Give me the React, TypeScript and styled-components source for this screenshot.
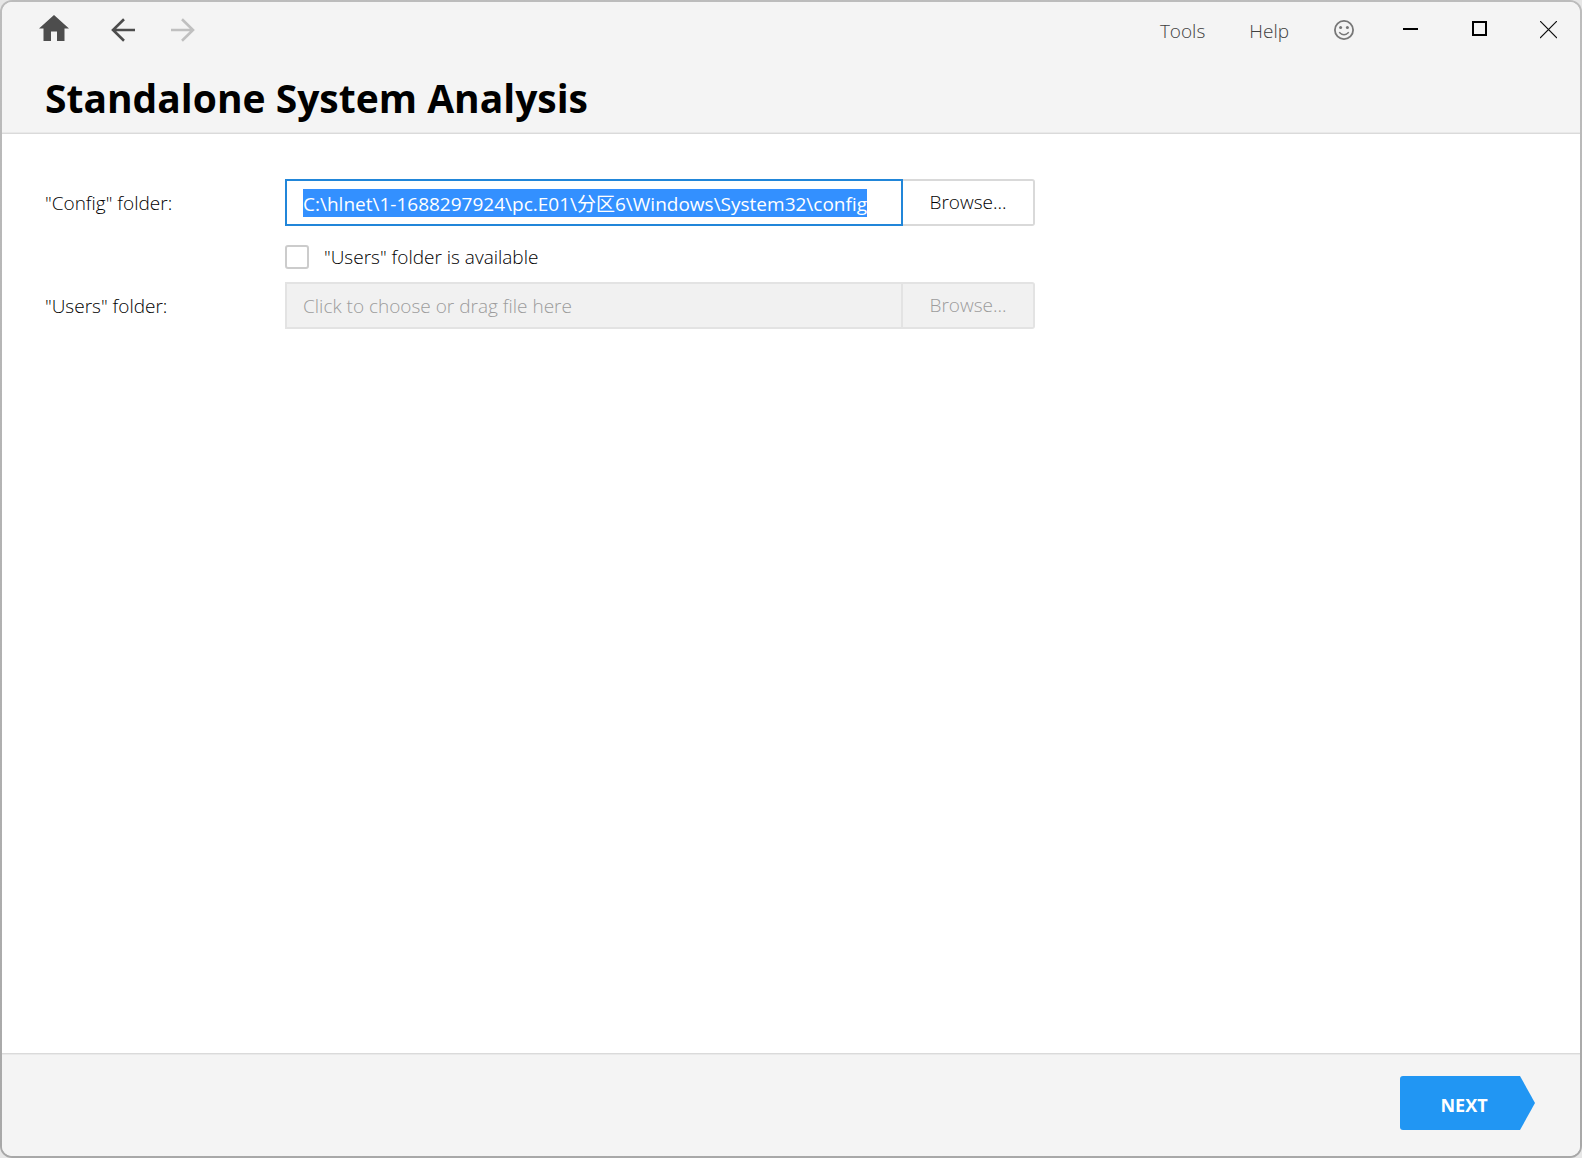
import { useEffect, useRef, useState } from "react";
import styled, { createGlobalStyle } from "styled-components";

const GlobalStyle = createGlobalStyle`
  *, *::before, *::after { box-sizing: border-box; }
  body {
    margin: 0;
    background: #e6e6e6;
    font-family: "Open Sans", "Noto Sans", "Noto Sans CJK SC", sans-serif;
    font-size: 19px;
    font-weight: 300;
    line-height: 26px;
    color: #000;
  }
  button, input { font: inherit; color: inherit; }
`;

const WindowFrame = styled.div`
  display: flex;
  min-height: 100vh;
  padding: 2px;
  border-radius: 12px;
  background: linear-gradient(#bcbcbc, #a8a8a8);
`;

const Window = styled.div`
  flex: 1;
  display: flex;
  flex-direction: column;
  border-radius: 10px;
  overflow: hidden;
  background: #fff;
`;

const Header = styled.header`
  background: #f4f4f4;
  border-bottom: 1px solid #dadada;
  box-shadow: inset 0 -1px #e9e9e9;
`;

const TitleBar = styled.div`
  display: flex;
  justify-content: space-between;
  align-items: center;
  height: 56px;
  padding-left: 26px;
`;

const Group = styled.div<{ $gap: number }>`
  display: flex;
  align-items: center;
  gap: ${(p) => p.$gap}px;
`;

const BarButton = styled.button<{ $width?: number }>`
  display: flex;
  align-items: center;
  justify-content: center;
  width: ${(p) => (p.$width ? `${p.$width}px` : "auto")};
  height: 44px;
  padding: 0;
  border: 0;
  background: none;
  color: #4d4d4d;
  &:disabled { color: #c0c0c0; }
`;

const MenuButton = styled(BarButton)`
  padding: 2px 22px 0;
  color: #404040;
`;

const Title = styled.h1`
  margin: 0;
  padding: 13px 43px 8px;
  font-size: 39px;
  line-height: 54px;
  font-weight: 700;
  color: #000;
`;

const Main = styled.main`
  flex: 1;
  padding: 45px 43px;
`;

const Form = styled.form`
  display: grid;
  grid-template-columns: 240px minmax(0, 750px);
  align-items: center;
`;

const Label = styled.label``;

const PickerRow = styled.div`
  display: flex;
`;

const PathInput = styled.input`
  flex: 1;
  min-width: 0;
  height: 47px;
  padding: 0 16px;
  border: 2px solid #d9d9d9;
  outline: none;
  background: #fff;
  font-weight: 400;
  &:focus { border-color: #2186d9; }
  &::selection { background: #3390ff; color: #fff; }
  &::placeholder { color: #9c9c9c; font-weight: 300; opacity: 1; }
  &:disabled { background: #f1f1f1; border-color: #e3e3e3; }
`;

const BrowseButton = styled.button`
  width: 132px;
  height: 47px;
  padding: 0 0 2px;
  border: 2px solid #d9d9d9;
  border-left-width: 0;
  border-radius: 0 3px 3px 0;
  background: #fff;
  &:disabled {
    background: #f1f1f1;
    border-color: #e3e3e3;
    color: #9c9c9c;
  }
`;

const CheckRow = styled.div`
  grid-column: 2;
  display: flex;
  align-items: center;
  gap: 15px;
  height: 56px;
  padding-top: 6px;
`;

const Checkbox = styled.input`
  appearance: none;
  width: 24px;
  height: 24px;
  margin: 0;
  border: 2px solid #ccc;
  border-radius: 3px;
  background: #fff;
  &:checked { background: #2196f3; border-color: #2196f3; }
`;

const Footer = styled.footer`
  display: flex;
  justify-content: flex-end;
  padding: 22px 45px 26px;
  border-top: 1px solid #dadada;
  box-shadow: inset 0 1px #e9e9e9;
  background: #f4f4f4;
`;

const NextButton = styled.button`
  width: 135px;
  height: 54px;
  padding: 3px 7px 0 0;
  border: 0;
  border-radius: 3px 0 0 3px;
  background: #2196f3;
  clip-path: polygon(0 0, 120px 0, 100% 50%, 120px 100%, 0 100%);
  color: #fff;
  font-size: 18px;
  font-weight: 700;
`;

const HomeIcon = () => (
  <svg width="30" height="30" viewBox="0 0 30 30" fill="currentColor">
    <path d="M15 0 30 13.500H25.500V26H18V16.500H12V26H4.500V13.500H0Z" />
  </svg>
);

const BackIcon = () => (
  <svg width="24" height="24" viewBox="0 0 24 24" fill="none" stroke="currentColor" strokeWidth="2.600">
    <path d="M13 1.200 2 12 13 22.800M2 12H24" />
  </svg>
);

const ForwardIcon = () => (
  <svg width="24" height="24" viewBox="0 0 24 24" fill="none" stroke="currentColor" strokeWidth="2.600">
    <path d="M11 1.200 22 12 11 22.800M22 12H0" />
  </svg>
);

const SmileIcon = () => (
  <svg width="20" height="20" viewBox="0 0 20 20" fill="none" stroke="#777" strokeWidth="1.800">
    <circle cx="10" cy="10" r="9.100" />
    <circle cx="6.600" cy="7.600" r="1.500" fill="#777" stroke="none" />
    <circle cx="13.400" cy="7.600" r="1.500" fill="#777" stroke="none" />
    <path d="M5.200 12.300Q10 17.300 14.800 12.300" strokeWidth="1.500" />
  </svg>
);

const MinimizeIcon = () => (
  <svg width="15" height="16" viewBox="0 0 15 16">
    <path d="M0 6H15V8H0Z" fill="#000" />
  </svg>
);

const MaximizeIcon = () => (
  <svg width="15" height="18" viewBox="0 0 15 18" fill="none" stroke="#000" strokeWidth="2">
    <path d="M1 1H14V14H1Z" />
  </svg>
);

const CloseIcon = () => (
  <svg width="17" height="18" viewBox="0 0 17 18" fill="none" stroke="#111" strokeWidth="1.200">
    <path d="M0 0 17 17M17 0 0 17" />
  </svg>
);

export default function App() {
  const configRef = useRef<HTMLInputElement>(null);
  const [config, setConfig] = useState("C:\\hlnet\\1-1688297924\\pc.E01\\分区6\\Windows\\System32\\config");
  const [users, setUsers] = useState("");
  const [hasUsers, setHasUsers] = useState(false);

  useEffect(() => {
    configRef.current?.focus();
    configRef.current?.select();
  }, []);

  return (
    <>
      <GlobalStyle />
      <WindowFrame>
        <Window>
          <Header>
            <TitleBar>
              <Group $gap={8}>
                <BarButton $width={52} aria-label="Home"><HomeIcon /></BarButton>
                <BarButton $width={70} aria-label="Back"><BackIcon /></BarButton>
                <BarButton $width={34} aria-label="Forward" disabled><ForwardIcon /></BarButton>
              </Group>
              <Group $gap={2}>
                <Group $gap={0}>
                  <MenuButton>Tools</MenuButton>
                  <MenuButton>Help</MenuButton>
                  <BarButton $width={66} aria-label="Feedback"><SmileIcon /></BarButton>
                </Group>
                <Group $gap={6}>
                  <BarButton $width={63} aria-label="Minimize"><MinimizeIcon /></BarButton>
                  <BarButton $width={63} aria-label="Maximize"><MaximizeIcon /></BarButton>
                  <BarButton $width={63} aria-label="Close"><CloseIcon /></BarButton>
                </Group>
              </Group>
            </TitleBar>
            <Title>Standalone System Analysis</Title>
          </Header>
          <Main>
            <Form id="analysis" onSubmit={(e) => e.preventDefault()}>
              <Label htmlFor="config-folder">"Config" folder:</Label>
              <PickerRow>
                <PathInput
                  id="config-folder"
                  ref={configRef}
                  value={config}
                  spellCheck={false}
                  onChange={(e) => setConfig(e.target.value)}
                />
                <BrowseButton type="button">Browse...</BrowseButton>
              </PickerRow>
              <CheckRow>
                <Checkbox
                  id="users-available"
                  type="checkbox"
                  checked={hasUsers}
                  onChange={(e) => setHasUsers(e.target.checked)}
                />
                <Label htmlFor="users-available">"Users" folder is available</Label>
              </CheckRow>
              <Label htmlFor="users-folder">"Users" folder:</Label>
              <PickerRow>
                <PathInput
                  id="users-folder"
                  value={users}
                  placeholder="Click to choose or drag file here"
                  disabled={!hasUsers}
                  onChange={(e) => setUsers(e.target.value)}
                />
                <BrowseButton type="button" disabled={!hasUsers}>Browse...</BrowseButton>
              </PickerRow>
            </Form>
          </Main>
          <Footer>
            <NextButton type="submit" form="analysis">NEXT</NextButton>
          </Footer>
        </Window>
      </WindowFrame>
    </>
  );
}
